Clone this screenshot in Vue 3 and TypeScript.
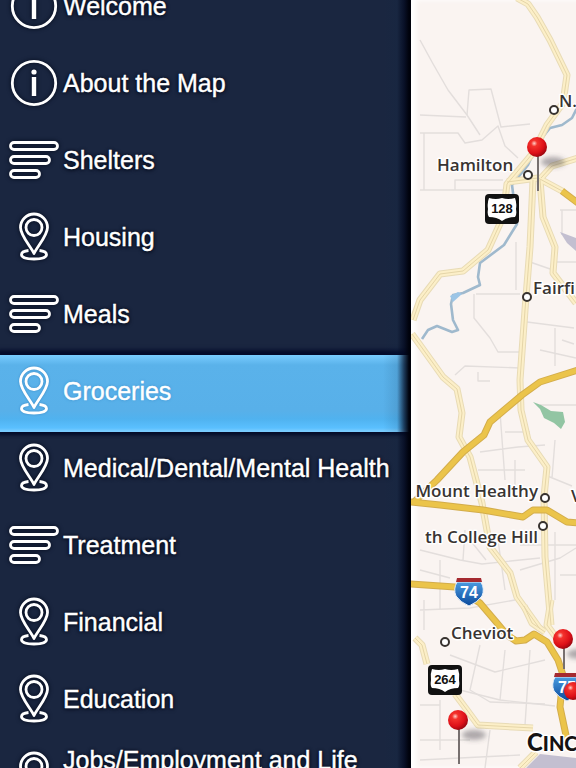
<script setup lang="ts">
type IconKind = 'info' | 'list' | 'pin'

interface MenuItem {
  label: string
  icon: IconKind
  active?: boolean
  tall?: boolean
}

interface Place {
  name: string
  x: number
  y: number
  anchor: 'start' | 'end'
}

const items: MenuItem[] = [
  { label: 'Welcome', icon: 'info' },
  { label: 'About the Map', icon: 'info' },
  { label: 'Shelters', icon: 'list' },
  { label: 'Housing', icon: 'pin' },
  { label: 'Meals', icon: 'list' },
  { label: 'Groceries', icon: 'pin', active: true },
  { label: 'Medical/Dental/Mental Health', icon: 'pin' },
  { label: 'Treatment', icon: 'list' },
  { label: 'Financial', icon: 'pin' },
  { label: 'Education', icon: 'pin' },
  { label: 'Jobs/Employment and Life', icon: 'pin', tall: true },
]

const towns: [number, number][] = [
  [554, 110], [528, 175], [527, 297], [545, 498], [543, 526], [445, 642],
]

const pins: { x: number; y: number; stem: number }[] = [
  { x: 537, y: 147, stem: 44 },
  { x: 458, y: 720, stem: 44 },
  { x: 563, y: 639, stem: 30 },
]

const minorRoads: string[] = [
  'M420 40L432 62L448 90L467 115L480 135',
  'M420 115L466 117M467 115L469 90L491 89L501 127L530 124',
  'M420 133H458L465 143L482 140L498 126L505 146L518 158',
  'M424 133V190H455V180H503M420 190H504',
  'M476 294H520M474 294V318L490 338L498 352H520M455 375L465 366L520 368',
  'M516 242V290M527 322L574 328M555 328V366M540 350L576 358M562 340L574 344',
  'M478 372V381H490M500 412L505 480M505 432H530M480 452L518 447L545 445',
  'M478 470H525M515 460V492M540 405H576M555 440L552 478M545 475L572 486',
  'M420 550L460 560L482 564L540 558M465 530L463 560M420 570L450 578',
  'M420 610L470 608L515 600M440 560V610M498 540L505 590M424 600V630',
  'M520 570L560 558L576 548M555 532V600M560 575H576M520 545H576',
  'M450 655L495 672L545 660M480 645L470 690L490 702L545 704',
  'M505 650L500 700M530 650L525 725M460 690L500 700L555 706',
  'M420 705H440M440 700V750M420 740H470M490 730L485 768M420 760L520 755',
  'M560 210H576M562 210V235M555 262H576M530 262L553 270M470 540L486 560',
]

const paleRoads: string[] = [
  'M517 -2L528 4L537 17L550 40L567 75L563 103L547 125L533 153L507 184L503 217L488 250L463 271L440 274L420 300L413 320',
  'M412 334L420 345L443 377L457 389L462 413L459 437L470 457L482 503L490 547L510 573L517 597L540 629',
  'M533 180L530 247L525 310L520 380L521 410L528 440L547 467L544 497L545 557L551 625',
  'M540 180L543 217L555 247L553 273L576 303',
  'M541 178L552 166L578 158',
  'M507 182L538 178L564 192',
  'M415 638L422 645L427 664',
  'M455 694L467 710L478 725L533 728',
  'M524 606L532 623L545 632M551 600L547 625L558 640',
  'M520 768L536 752',
]

const boldRoads: string[] = [
  'M413 503L437 480L463 452L484 435L490 422L522 395L540 382L578 370',
  'M410 502L440 505L483 510L523 517L533 510L547 510L567 522L578 523',
  'M410 584L455 587L480 603L497 623L507 635L516 641L525 640L534 634L547 642L558 660L563 675L560 707L567 740',
  'M562 191L578 203',
]

const places: Place[] = [
  { name: 'Hamilton', x: 437, y: 171, anchor: 'start' },
  { name: 'N.', x: 559, y: 107, anchor: 'start' },
  { name: 'Fairfi', x: 533, y: 294, anchor: 'start' },
  { name: 'Mount Healthy', x: 538, y: 497, anchor: 'end' },
  { name: 'th College Hill', x: 538, y: 543, anchor: 'end' },
  { name: 'V', x: 571, y: 502, anchor: 'start' },
  { name: 'Cheviot', x: 451, y: 639, anchor: 'start' },
]
</script>

<template>
  <div class="app">
    <nav class="sidebar" aria-label="Categories">
      <ul class="menu">
        <li v-for="item in items" :key="item.label">
          <a href="#" class="item" :class="{ active: item.active, tall: item.tall }">
            <svg class="icon" viewBox="0 0 50 50" aria-hidden="true">
              <g v-if="item.icon === 'info'">
                <circle cx="25" cy="25" r="21.7" />
                <circle class="solid" cx="25" cy="14" r="2.6" />
                <path class="stem" d="M25 19V38" />
              </g>
              <g v-else-if="item.icon === 'list'">
                <rect x="1.5" y="7.5" width="47" height="7" rx="3.5" />
                <rect x="1.5" y="21.5" width="39" height="7" rx="3.5" />
                <rect x="1.5" y="35.5" width="29" height="7" rx="3.5" />
              </g>
              <g v-else>
                <path d="M25 41.500C22 35 11.500 23.500 11.500 15.500A13.500 13.500 0 0 1 38.500 15.500C38.500 23.500 28 35 25 41.500Z" />
                <circle cx="25" cy="15.500" r="8" />
                <path d="M19.500 38.500C15 39 12.500 40.500 12.500 42.500C12.500 45.500 18 47 25 47S37.500 45.500 37.500 42.500C37.500 40.500 35 39 30.500 38.500" />
              </g>
            </svg>
            <span class="label">{{ item.label }}</span>
          </a>
        </li>
      </ul>
    </nav>

    <main class="map">
      <svg class="canvas" viewBox="411 0 165 768" preserveAspectRatio="xMinYMin slice" role="img" aria-label="Map">
        <defs>
          <radialGradient id="ball" cx="0.36" cy="0.32" r="0.7">
            <stop offset="0" stop-color="#ffd0c8" />
            <stop offset="0.22" stop-color="#f4322c" />
            <stop offset="0.7" stop-color="#dd1018" />
            <stop offset="1" stop-color="#9c0710" />
          </radialGradient>
          <linearGradient id="shield" x1="0" y1="0" x2="0" y2="1">
            <stop offset="0" stop-color="#4a9be0" />
            <stop offset="1" stop-color="#0b4a9c" />
          </linearGradient>
          <filter id="soft" x="-50%" y="-50%" width="200%" height="200%">
            <feGaussianBlur stdDeviation="2.5" />
          </filter>
        </defs>

        <path v-for="d in minorRoads" :key="d" class="minor" :d="d" />
        <path class="park" d="M533 402L541 405L551 411L563 412L565 422L561 429L554 423L544 418L540 409Z" />
        <path class="lilac" d="M560 232L576 238V251L567 243Z" />
        <path class="lilac" d="M526 768L540 754L576 758V768Z" />
        <path class="river" d="M578 106L572 118L562 125L550 128L538 143L528 165L512 185L517 224L504 245L480 263L478 277L480 285L463 293L453 295L451 304L453 320L458 330L452 332L437 326L428 330L422 339" />
        <path class="pond" d="M450 296L458 292L462 294L453 302Z" />

        <path v-for="d in paleRoads" :key="'c' + d" class="pale-case" :d="d" />
        <path v-for="d in paleRoads" :key="'f' + d" class="pale-fill" :d="d" />
        <path v-for="d in paleRoads" :key="'l' + d" class="pale-line" :d="d" />
        <path v-for="d in boldRoads" :key="'c' + d" class="bold-case" :d="d" />
        <path v-for="d in boldRoads" :key="'f' + d" class="bold-fill" :d="d" />

        <circle v-for="[x, y] in towns" :key="x + '-' + y" class="town" :cx="x" :cy="y" r="4" />

        <text
          v-for="p in places"
          :key="p.name"
          class="place"
          :x="p.x"
          :y="p.y"
          :text-anchor="p.anchor"
        >{{ p.name }}</text>
        <text class="city" x="527" y="751">C<tspan class="small-cap">INC</tspan></text>

        <g v-for="s in [{ n: '128', x: 502, y: 209 }, { n: '264', x: 445, y: 680 }]" :key="s.n">
          <rect class="sign" :x="s.x - 17" :y="s.y - 15" width="34" height="30" rx="4" />
          <path
            class="sign-face"
            :transform="`translate(${s.x} ${s.y})`"
            d="M-13 -11Q-6 -9 0 -11Q6 -9 13 -11Q15 -6 14 0Q15 6 13 8Q5 8 0 12Q-5 8 -13 8Q-15 6 -14 0Q-15 -6 -13 -11Z"
          />
          <text class="sign-text" :x="s.x" :y="s.y + 4">{{ s.n }}</text>
        </g>

        <g v-for="h in [{ n: '74', x: 469, y: 591 }, { n: '75', x: 567, y: 686 }]" :key="h.n" :transform="`translate(${h.x} ${h.y})`">
          <path class="shield" d="M-12 -9H12Q16 -2 13 5Q9 11 0 15Q-9 11 -13 5Q-16 -2 -12 -9Z" />
          <path class="shield-top" d="M-12 -13H12L13 -9H-13Z" />
          <text class="shield-text" x="0" y="7">{{ h.n }}</text>
        </g>

        <g v-for="p in pins" :key="'pin' + p.x">
          <ellipse class="shade" :cx="p.x + 16" :cy="p.y + 15" rx="12" ry="5" />
          <path class="needle" :d="`M${p.x + 1} ${p.y + 8}V${p.y + p.stem}`" />
          <circle fill="url(#ball)" :cx="p.x" :cy="p.y" r="10" />
        </g>
        <circle fill="url(#ball)" cx="573" cy="691" r="9" />
      </svg>
    </main>
  </div>
</template>

<style>
body {
  margin: 0;
  overflow: hidden;
}
</style>

<style scoped>
.app {
  display: grid;
  grid-template-columns: minmax(0, 411fr) minmax(0, 165fr);
  height: 100vh;
  overflow: hidden;
  background: #1a2640;
  font-family: "Liberation Sans", Arial, Helvetica, sans-serif;
}

.sidebar {
  display: grid;
  overflow: hidden;
  background: #1a2640;
}

.sidebar > .menu,
.sidebar::after {
  grid-area: 1 / 1;
}

.sidebar::after {
  content: "";
  justify-self: end;
  width: 28px;
  pointer-events: none;
  z-index: 1;
  background: linear-gradient(to right, rgba(12, 52, 82, 0) 0, rgba(12, 42, 72, 0.12) 14px, rgba(2, 8, 30, 0.7) 21px, #00020c 26px);
}

/* The list is scrolled partway into its first entry. */
.menu {
  margin: -30px 0 0;
  padding: 0;
  list-style: none;
}

.item {
  display: flex;
  align-items: center;
  gap: 4px;
  box-sizing: border-box;
  min-height: 77px;
  padding: 0 9px 6px;
  color: #fff;
  font-size: 25px;
  line-height: 28px;
  text-decoration: none;
  text-shadow: 0 0 3px #020818, 0 1px 4px #020818;
  -webkit-text-stroke: 0.4px #fff;
}

.item.active {
  background: linear-gradient(#78ccff 0, #5ab2ea 10px, #58b0e9 56px, #50b2ef 64px, #5ac0ff 73px, #79ccff 76px);
  box-shadow: 0 -2px 4px 3px #040b2b, 0 1px 3px 2px #06102c;
  text-shadow: 0 0 3px #3a8bc7;
}

.label {
  white-space: nowrap;
}

.item.tall .label {
  min-height: 60px;
}

.icon {
  flex: none;
  width: 50px;
  height: 50px;
  fill: none;
  stroke: #fff;
  stroke-width: 2.8;
  stroke-linejoin: round;
  filter: drop-shadow(0 0 2px #020818);
}

.active .icon {
  filter: drop-shadow(0 0 1px #3a8bc7);
}

.icon .solid {
  fill: #fff;
  stroke: none;
}

.icon .stem {
  stroke-width: 4.4;
}

.map {
  overflow: hidden;
  background: #faf4f1;
  box-shadow: inset 5px 0 5px #fff;
}

.canvas {
  display: block;
  width: 100%;
  height: 100%;
  fill: none;
  stroke-linejoin: round;
}

.minor {
  stroke: #e3dedc;
  stroke-width: 1.4;
}

.park {
  fill: #92c5a3;
}

.lilac {
  fill: #c3bfd0;
}

.river {
  stroke: #9fb9cd;
  stroke-width: 2.6;
}

.pond {
  fill: #9cc5e6;
}

.pale-case {
  stroke: #e8dbb6;
  stroke-width: 7;
}

.pale-fill {
  stroke: #fcefc8;
  stroke-width: 5;
}

.pale-line {
  stroke: #e5d5a8;
  stroke-width: 1;
}

.bold-case {
  stroke: #d3ad4c;
  stroke-width: 7;
}

.bold-fill {
  stroke: #ebc44a;
  stroke-width: 5;
}

.town {
  fill: #fff;
  stroke: #37322f;
  stroke-width: 2;
}

.place {
  font-family: "Open Sans", "Noto Sans", sans-serif;
  font-size: 17px;
  font-weight: 600;
  fill: #383432;
  stroke: #fff;
  stroke-width: 3;
  paint-order: stroke;
}

.city {
  font-family: Lato, "Open Sans", sans-serif;
  font-size: 24px;
  font-weight: 900;
  fill: #151212;
  stroke: #fff;
  stroke-width: 3;
  paint-order: stroke;
}

.small-cap {
  font-size: 20px;
}

.sign {
  fill: #111;
}

.sign-face {
  fill: #fff;
}

.sign-text {
  font-family: "Liberation Sans", Arial, sans-serif;
  font-size: 13px;
  font-weight: 700;
  text-anchor: middle;
  fill: #111;
}

.shield {
  fill: url(#shield);
  stroke: #e8f1fa;
  stroke-width: 1;
}

.shield-top {
  fill: #a52a30;
}

.shield-text {
  font-family: "Liberation Sans", Arial, sans-serif;
  font-size: 16px;
  font-weight: 700;
  text-anchor: middle;
  fill: #fff;
}

.shade {
  fill: rgba(80, 75, 85, 0.45);
  filter: url(#soft);
}

.needle {
  stroke: #77706f;
  stroke-width: 2;
}
</style>
